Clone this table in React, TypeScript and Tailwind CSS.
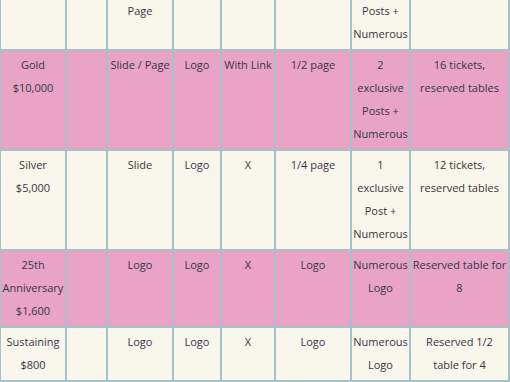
import React from "react";

type Row = { bg: string; cells: React.ReactNode[] };

const cream = "bg-[#f9f6ec]";
const pink = "bg-[#e9a3c5]";

const rows: Row[] = [
  {
    bg: cream,
    cells: [
      <>Platinum<br />$15,000</>,
      "",
      <>Slide /<br />Full<br />Page</>,
      "Logo",
      "With Link",
      "Full page",
      <>3<br />exclusive<br />Posts +<br />Numerous</>,
      <>20 tickets,<br />reserved tables</>,
    ],
  },
  {
    bg: pink,
    cells: [
      <>Gold<br />$10,000</>,
      "",
      "Slide / Page",
      "Logo",
      "With Link",
      "1/2 page",
      <>2<br />exclusive<br />Posts +<br />Numerous</>,
      <>16 tickets,<br />reserved tables</>,
    ],
  },
  {
    bg: cream,
    cells: [
      <>Silver<br />$5,000</>,
      "",
      "Slide",
      "Logo",
      "X",
      "1/4 page",
      <>1<br />exclusive<br />Post +<br />Numerous</>,
      <>12 tickets,<br />reserved tables</>,
    ],
  },
  {
    bg: pink,
    cells: [
      <>25th<br />Anniversary<br />$1,600</>,
      "",
      "Logo",
      "Logo",
      "X",
      "Logo",
      <>Numerous<br />Logo</>,
      <>Reserved table for<br />8</>,
    ],
  },
  {
    bg: cream,
    cells: [
      <>Sustaining<br />$800</>,
      "",
      "Logo",
      "Logo",
      "X",
      "Logo",
      <>Numerous<br />Logo</>,
      <>Reserved 1/2<br />table for 4</>,
    ],
  },
];

const widths = [66, 41, 66, 48, 54, 76, 59, 99];

export default function App() {
  return (
    <div className="w-[510px] h-[382px] overflow-hidden bg-white">
      <table
        className="table-fixed border-collapse mt-[-51px] ml-[-1px] w-[510px] text-[11px] leading-[23px] text-[#363645]"
        style={{ fontFamily: '"Open Sans", "Noto Sans", sans-serif' }}
      >
        <colgroup>
          {widths.map((w, i) => (
            <col key={i} style={{ width: w }} />
          ))}
        </colgroup>
        <tbody>
          {rows.map((r, ri) => (
            <tr key={ri} className={r.bg}>
              {r.cells.map((c, ci) => (
                <td
                  key={ci}
                  className="border-2 border-[#a3c3c8] align-top text-center pt-[2px] pb-[4px] px-0 whitespace-nowrap"
                >
                  {c}
                </td>
              ))}
            </tr>
          ))}
        </tbody>
      </table>
    </div>
  );
}
